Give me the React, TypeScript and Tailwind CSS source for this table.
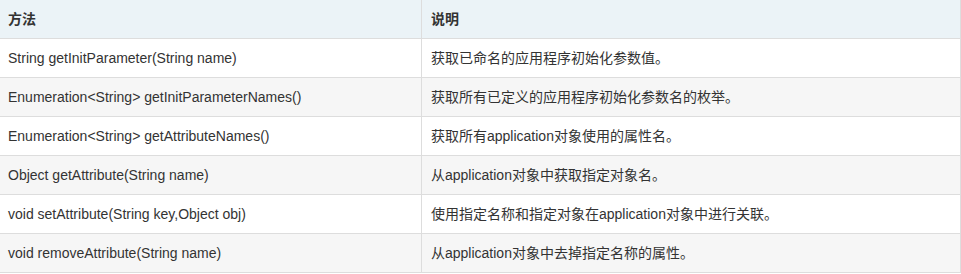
import React from "react";

const rows: [string, string][] = [
  ["String getInitParameter(String name)", "获取已命名的应用程序初始化参数值。"],
  ["Enumeration<String> getInitParameterNames()", "获取所有已定义的应用程序初始化参数名的枚举。"],
  ["Enumeration<String> getAttributeNames()", "获取所有application对象使用的属性名。"],
  ["Object getAttribute(String name)", "从application对象中获取指定对象名。"],
  ["void setAttribute(String key,Object obj)", "使用指定名称和指定对象在application对象中进行关联。"],
  ["void removeAttribute(String name)", "从application对象中去掉指定名称的属性。"],
];

export default function App() {
  return (
    <div
      className="w-[961px] h-[274px] bg-white text-[14px] text-[#333]"
      style={{ fontFamily: '"Liberation Sans", Arial, "Noto Sans CJK SC", sans-serif' }}
    >
      <div className="flex h-[39px] border-b border-[#dddddd] bg-[#ebf3f7] font-bold">
        <div className="w-[422px] shrink-0 border-r border-[#dddddd] flex items-center pl-[8px]">方法</div>
        <div className="flex-1 border-r border-[#dddddd] flex items-center pl-[9px]">说明</div>
      </div>
      {rows.map(([a, b], i) => (
        <div
          key={i}
          className={`flex h-[39px] border-b border-[#dddddd] ${i % 2 === 1 ? "bg-[#f6f6f6]" : "bg-white"}`}
        >
          <div className="w-[422px] shrink-0 border-r border-[#dddddd] flex items-center pl-[8px]">{a}</div>
          <div className="flex-1 border-r border-[#dddddd] flex items-center pl-[9px]">{b}</div>
        </div>
      ))}
    </div>
  );
}
